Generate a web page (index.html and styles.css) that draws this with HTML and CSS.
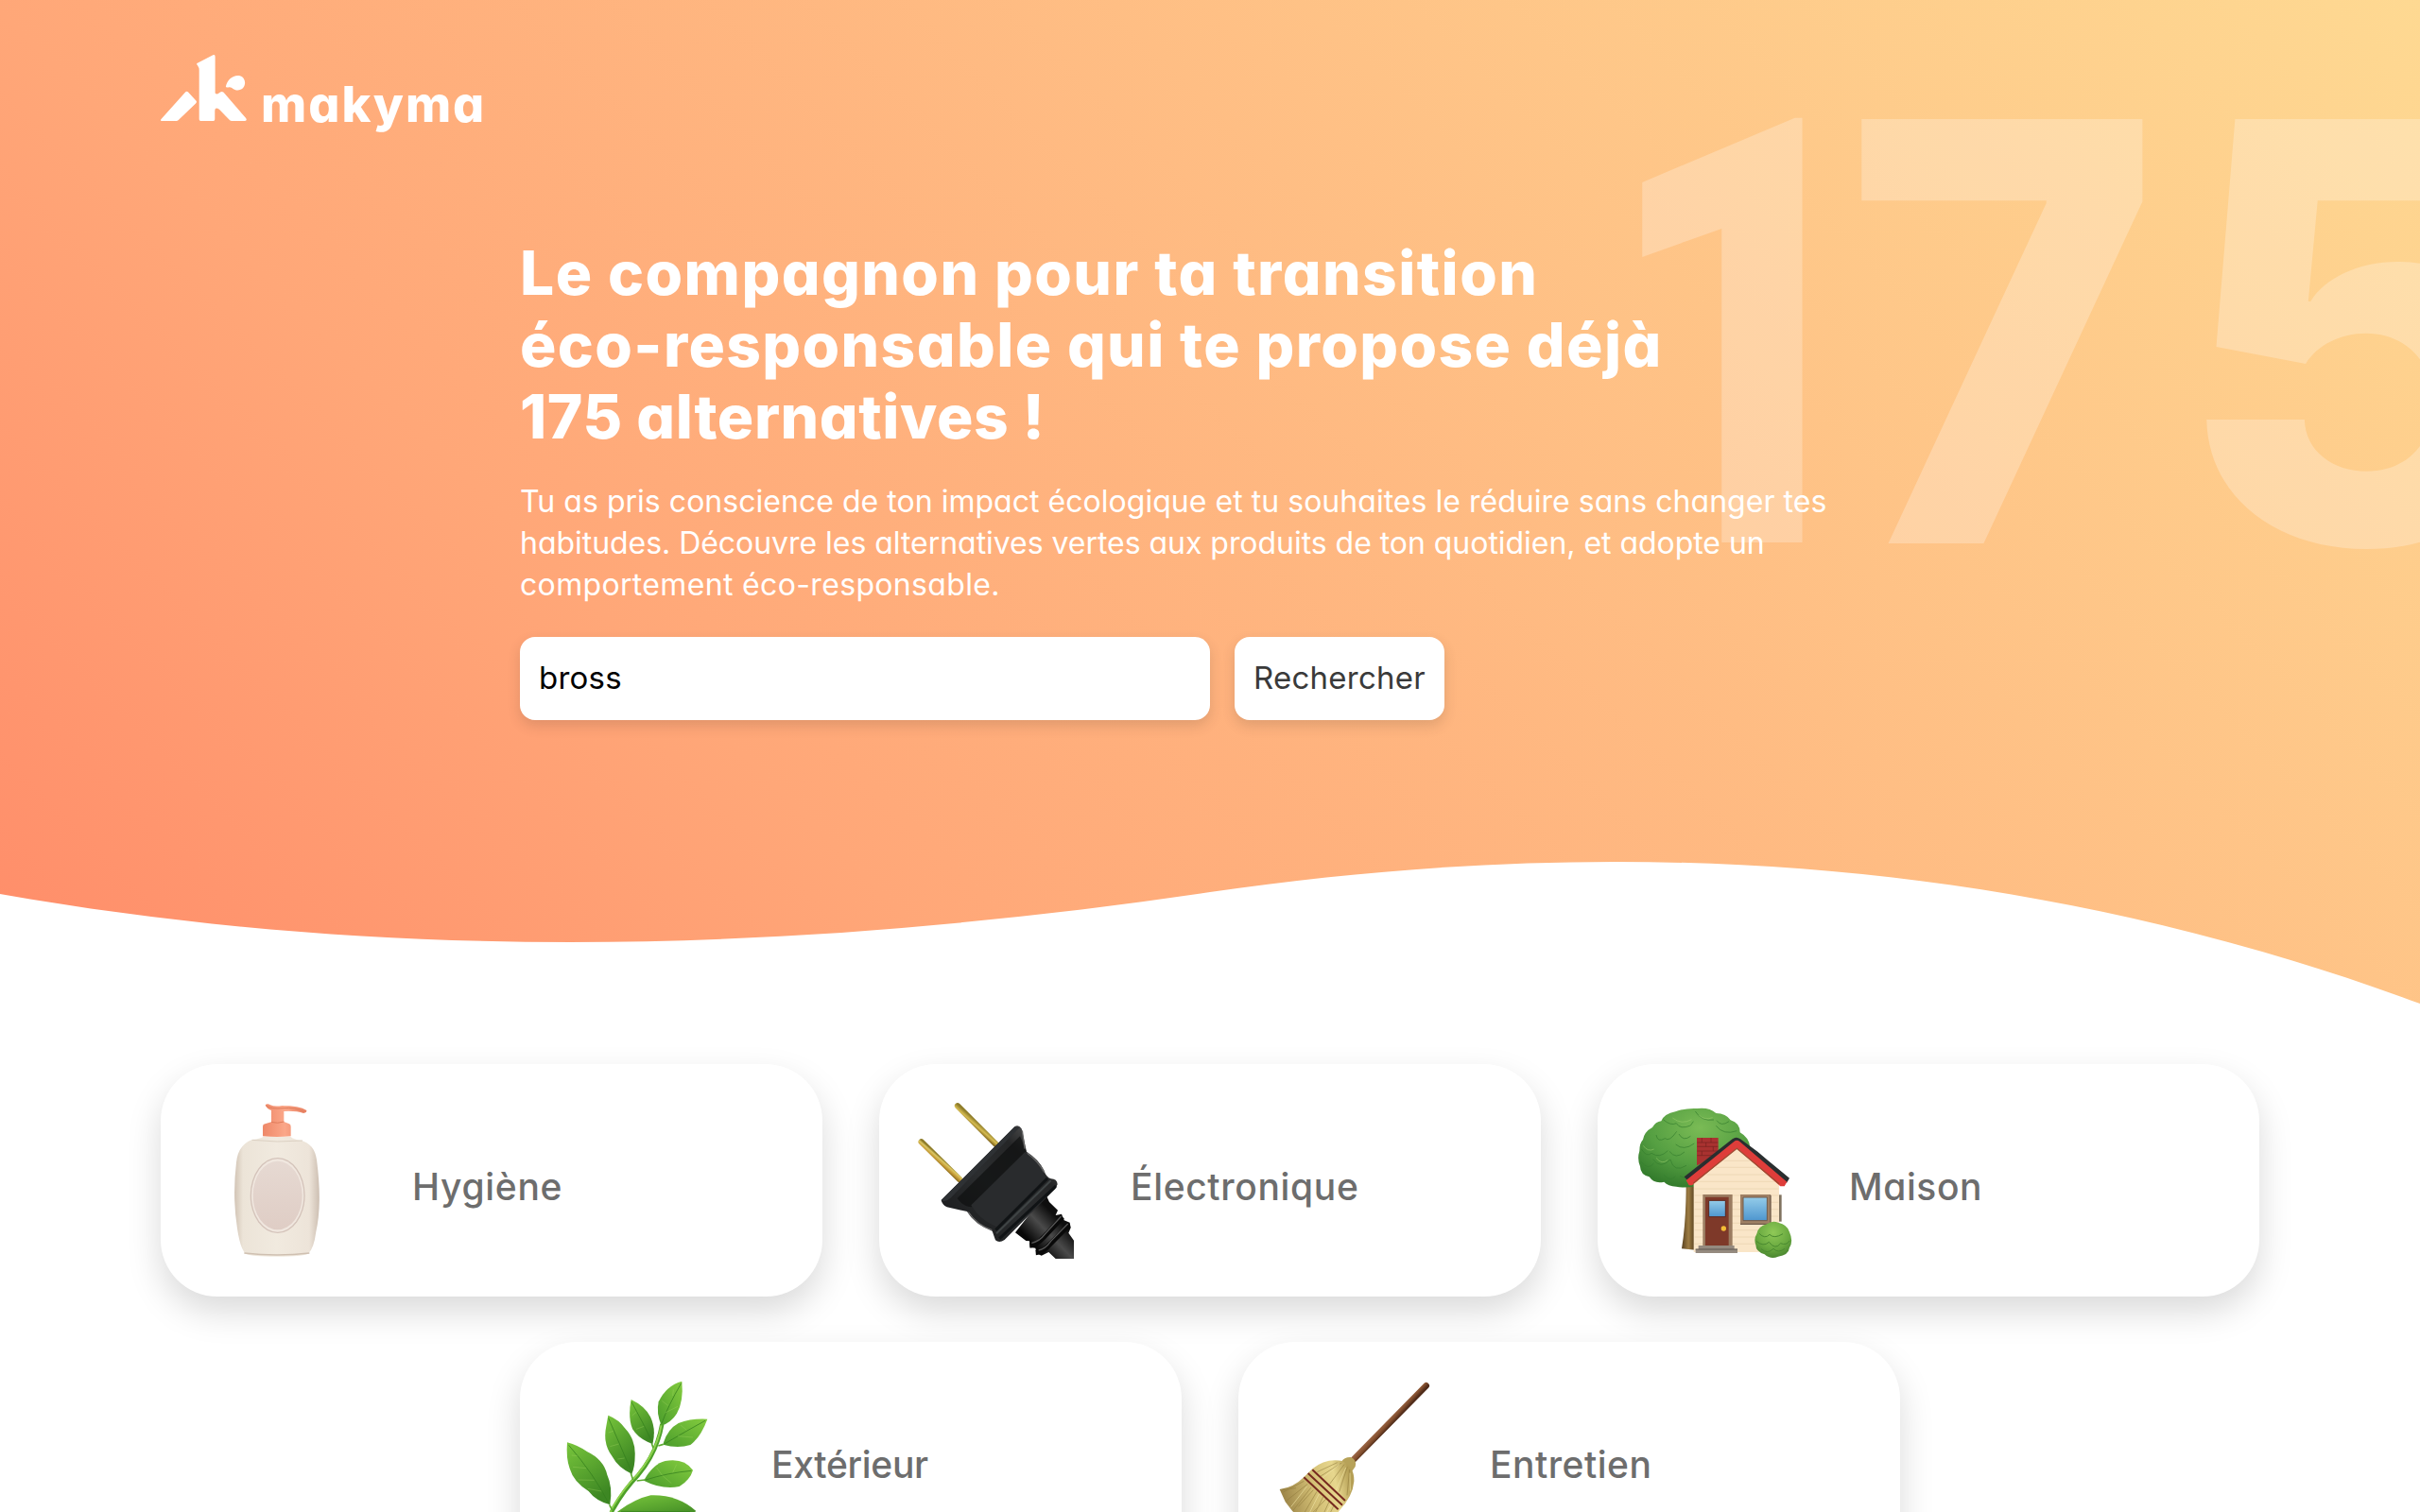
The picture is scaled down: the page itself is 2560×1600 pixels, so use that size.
FILE: index.html
```html
<!DOCTYPE html>
<html lang="fr">
<head>
<meta charset="utf-8">
<title>makyma</title>
<link rel="stylesheet" href="styles.css">
</head>
<body>
<header class="hero">
  <svg class="wave" viewBox="0 0 2560 152" preserveAspectRatio="none" aria-hidden="true">
    <path d="M0 36C427 111 853 97 1280 34C1707 -28 2133 -6 2560 152V153H0Z" fill="#fff"/>
  </svg>
  <div class="count" aria-hidden="true"><span class="one">1</span><span class="seven">7</span><span class="five">5</span></div>
  <a class="logo">
    <svg class="logo-mark" viewBox="60 54 273 211" aria-hidden="true">
      <g fill="#fff">
        <path d="M138 173Q142 169 147 173L172 200Q176 205 171 209L116 262Q113 265 109 265H62Q57 264 61 259Z"/>
        <path d="M175 81L226 55Q233 52 233 60V176Q238 182 245 176Q253 168 260 174L331 256Q336 265 328 265H286Q282 265 279 262L246 228Q232 219 232 232V260Q232 265 227 265H187Q182 265 182 260V102Q182 95 177 88Q173 84 175 81Z"/>
        <path d="M267 155C271 135 287 120 305 120C319 120 328 131 328 143C328 157 318 167 305 167C291 167 287 156 278 157Q266 159 267 155Z"/>
      </g>
    </svg>
    <span class="logo-name">makyma</span>
  </a>
  <div class="intro">
    <h1><span class="h-a">Le compagnon pour ta transition</span> <span class="h-b">éco-responsable qui te propose déjà</span> <span class="h-c">175 alternatives !</span></h1>
    <p><span class="p-a">Tu as pris conscience de ton impact écologique et tu souhaites le réduire sans changer tes</span> <span class="p-b">habitudes. Découvre les alternatives vertes aux produits de ton quotidien, et adopte un</span> <span class="p-c">comportement éco-responsable.</span></p>
    <form class="search">
      <input class="field" type="text" value="bross" aria-label="Recherche">
      <button class="submit" type="button">Rechercher</button>
    </form>
  </div>
</header>
<main class="cards">
  <a class="card">
    <svg class="icon" viewBox="-30 48 498 498">
      <defs>
        <linearGradient id="body"><stop offset="0" stop-color="#d2c4b5"/><stop offset=".1" stop-color="#ece4d8"/><stop offset=".5" stop-color="#f1eadf"/><stop offset=".88" stop-color="#ede4d9"/><stop offset="1" stop-color="#cdbfb2"/></linearGradient>
        <linearGradient id="label" x2="0" y2="1"><stop offset="0" stop-color="#e6d9d2"/><stop offset="1" stop-color="#dfcdc5"/></linearGradient>
        <linearGradient id="pump"><stop offset="0" stop-color="#ee8868"/><stop offset=".5" stop-color="#fba789"/><stop offset="1" stop-color="#e77f60"/></linearGradient>
      </defs>
      <path d="M176 158H262Q271 167 295 170Q338 181 345 232Q363 370 343 460Q336 515 318 530Q300 539 220 539Q135 539 119 530Q102 512 93 450Q77 350 90 240Q96 184 140 168Q170 164 176 158Z" fill="url(#body)"/>
      <path d="M115 528Q220 540 322 528" fill="none" stroke="#cfc0b1" stroke-width="4"/>
      <path d="M140 169Q220 178 300 171" fill="none" stroke="#dcd1c3" stroke-width="3"/>
      <ellipse cx="221" cy="345" rx="87" ry="120" fill="#d4c3ba"/>
      <ellipse cx="221" cy="345" rx="83" ry="116" fill="#f0e7df"/>
      <ellipse cx="221" cy="345" rx="78" ry="109" fill="url(#label)"/>
      <path d="M174 126Q174 119 181 118L201 112V75Q186 70 182 58Q188 52 198 58Q212 64 235 60Q290 60 313 75Q314 82 303 84Q280 76 241 78V111L258 118Q263 120 263 127V157Q220 161 174 157Z" fill="url(#pump)"/>
      <path d="M184 60Q200 72 240 68Q275 64 305 80M201 112Q220 118 241 111" fill="none" stroke="#e07c5b" stroke-width="3"/>
    </svg>
    <span class="t-hyg">Hygiène</span>
  </a>
  <a class="card">
    <svg class="icon" viewBox="60 48 498 498">
      <defs>
        <linearGradient id="gold" gradientUnits="userSpaceOnUse" x1="125" y1="245" x2="140" y2="228"><stop offset="0" stop-color="#80651c"/><stop offset=".4" stop-color="#c59a35"/><stop offset=".75" stop-color="#dcc763"/><stop offset="1" stop-color="#8e7c29"/></linearGradient>
        <linearGradient id="gold2" gradientUnits="userSpaceOnUse" x1="240" y1="131" x2="255" y2="114"><stop offset="0" stop-color="#80651c"/><stop offset=".5" stop-color="#d6bc52"/><stop offset="1" stop-color="#8e7c29"/></linearGradient>
        <linearGradient id="plug" x1="0" y1="1" x2=".9" y2=".1"><stop offset="0" stop-color="#151617"/><stop offset=".5" stop-color="#2b2d2f"/><stop offset=".8" stop-color="#252627"/><stop offset="1" stop-color="#555"/></linearGradient>
        <linearGradient id="cord" gradientUnits="userSpaceOnUse" x1="420" y1="490" x2="515" y2="400"><stop offset="0" stop-color="#080808"/><stop offset=".45" stop-color="#4a4a4a"/><stop offset=".85" stop-color="#0e0e0e"/></linearGradient>
      </defs>
      <path d="M74 175L196 295" stroke="url(#gold)" stroke-width="19" stroke-linecap="round"/>
      <path d="M189 61L311 183" stroke="url(#gold2)" stroke-width="19" stroke-linecap="round"/>
      <path d="M372 463L468 340L480 366L507 392L500 408L519 404L527 424L545 431L548 448L541 464L558 488V546H500L478 525L455 536L439 528L436 512L419 510L417 490L406 489Z" fill="url(#cord)"/>
      <path d="M418 504Q440 502 463 477L522 414M437 527Q462 525 482 500L542 439" fill="none" stroke="#090909" stroke-width="16"/>
      <path d="M424 496Q450 490 466 468L518 411M446 519Q468 515 485 490L539 435" fill="none" stroke="#555" stroke-width="4"/>
      <path d="M137 360L370 127Q382 119 392 133L408 206Q448 232 463 265Q470 288 485 292Q505 292 506 310Q502 324 490 333L338 486Q321 498 309 487L299 458Q241 435 219 396L155 382Q140 375 137 360Z" fill="url(#plug)"/>
      <path d="M137 360L370 127L386 129L166 354Q150 368 137 360Z" fill="#2e3134"/>
      <path d="M188 354L387 157L407 205L232 382Q206 380 188 354Z" fill="#0e0f10" opacity=".7"/>
      <path d="M232 376L403 207Q444 238 470 289L313 445Q259 423 232 376Z" fill="#292b2d"/>
      <path d="M310 455L474 291M322 482L501 315" stroke="#101315" stroke-width="9"/>
      <path d="M312 466L485 298" stroke="#3f4445" stroke-width="6"/>
      <path d="M410 211Q446 238 464 272M394 139L402 197M223 398Q249 438 298 455" fill="none" stroke="#666" stroke-width="4"/>
    </svg>
    <span class="t-ele">Électronique</span>
  </a>
  <a class="card">
    <svg class="icon" viewBox="60 48 498 498">
      <defs>
        <radialGradient id="tree" cx=".55" cy=".25" r=".75"><stop offset="0" stop-color="#7abb55"/><stop offset=".6" stop-color="#559f42"/><stop offset="1" stop-color="#357d2d"/></radialGradient>
        <radialGradient id="bush" cx=".5" cy=".3" r=".75"><stop offset="0" stop-color="#8fc957"/><stop offset=".6" stop-color="#68a83f"/><stop offset="1" stop-color="#437f2c"/></radialGradient>
        <linearGradient id="trunk"><stop offset="0" stop-color="#57401f"/><stop offset=".5" stop-color="#9d7c43"/><stop offset="1" stop-color="#513b1c"/></linearGradient>
        <linearGradient id="glass" x2="0" y2="1"><stop offset="0" stop-color="#94cce9"/><stop offset="1" stop-color="#4e96cf"/></linearGradient>
      </defs>
      <path d="M221 305H250V518L207 514Q221 430 221 305Z" fill="url(#trunk)"/>
      <path d="M142 109Q151 86 187 79Q219 67 256 69Q294 64 316 84Q348 85 362 106Q392 115 392 145Q420 161 424 191L300 305Q223 326 190 317Q163 315 151 302Q119 309 104 286Q76 280 75 253Q65 229 73 204Q73 179 84 168Q88 143 114 129Q124 111 142 109Z" fill="url(#tree)"/>
      <g fill="none" stroke="#367f2f" stroke-width="3" opacity=".7">
        <path d="M148 104Q172 125 190 116Q202 137 235 123L244 110M250 78Q270 111 309 105M79 198Q96 225 111 211Q137 229 163 203M126 153Q130 178 154 164Q168 176 191 142M168 205Q188 232 216 207M116 230Q139 264 171 231M171 231Q182 275 222 250M79 239Q101 267 119 242M151 280Q170 303 187 285M201 283Q223 297 234 275M198 150Q212 175 235 157M316 124Q340 155 382 140M188 183Q213 205 247 180M318 107Q332 128 357 110"/>
      </g>
      <g fill="none" stroke="#9fd070" stroke-width="3" opacity=".5">
        <path d="M178 99Q207 122 238 104M85 187Q99 208 119 198M126 226Q144 249 163 232M262 91Q281 108 305 98"/>
      </g>
      <path d="M255 162H323V220L255 250Z" fill="#a93230"/>
      <path d="M256 177H322M256 190H322M256 204H322M256 218H318M271 162V177M300 162V177M284 177V190M307 190V204M271 204V218" stroke="#76221f" stroke-width="2"/>
      <path d="M245 300L381 193L516 300V525H245Z" fill="#fae6c8"/>
      <path d="M340 235H424M315 256H450M287 279H480M248 301H514M248 324H514M248 345H514M248 367H514M248 389H514M248 411H514M248 433H514M248 455H514M248 477H514M248 499H514" stroke="#e8d2ae" stroke-width="2"/>
      <path d="M516 343H524V428H516Z" fill="#807360"/>
      <path d="M215 286L368 166Q380 157 393 166L448 206L478 232L520 266L549 290L540 305L515 292L382 184L230 303Z" fill="#292e2f"/>
      <path d="M221 297L373 174Q382 167 391 174L541 302L533 316H520L382 195L240 313H230Z" fill="#de3d3a"/>
      <path d="M244 306L382 196L516 308" fill="none" stroke="#9d4b32" stroke-width="4"/>
      <path d="M274 342H368V507H274Z" fill="#9b7c61"/>
      <path d="M282 350H356V505H282Z" fill="#7e3929"/>
      <path d="M293 361H346V413H293Z" fill="url(#glass)" stroke="#5d271e" stroke-width="3"/>
      <circle cx="340" cy="450" r="8" fill="#f5bd35"/>
      <path d="M260 504H374V515H384V528H251V516H260Z" fill="#958a7f"/>
      <path d="M251 516H384" stroke="#5e5750" stroke-width="3"/>
      <path d="M393 342H489V438H393Z" fill="#9f8064"/>
      <path d="M402 351H478V425H402Z" fill="url(#glass)" stroke="#725a48" stroke-width="3"/>
      <path d="M393 436H489V344" fill="none" stroke="#6f5b4b" stroke-width="4"/>
      <path d="M445 467Q450 443 477 436Q493 424 513 431Q543 438 549 461Q562 490 549 511Q546 535 513 539Q490 550 470 532Q442 524 442 502Q435 482 445 467Z" fill="url(#bush)"/>
      <path d="M453 466Q471 485 486 469Q500 484 528 467M444 490Q466 510 484 493Q504 520 521 497Q539 505 549 489M459 515Q480 533 498 514Q514 530 534 514" fill="none" stroke="#4a8a30" stroke-width="3"/>
    </svg>
    <span class="t-mai">Maison</span>
  </a>
  <a class="card">
    <svg class="icon" viewBox="30 60 498 498">
      <defs>
        <linearGradient id="leaf" x1="0" y1="0" x2=".5" y2="1"><stop offset="0" stop-color="#79c63c"/><stop offset="1" stop-color="#3d8723"/></linearGradient>
        <linearGradient id="leaf2" x1="1" y1="0" x2="0" y2="1"><stop offset="0" stop-color="#84cc3f"/><stop offset="1" stop-color="#4a9c2b"/></linearGradient>
      </defs>
      <path d="M190 545Q190 495 207 469Q240 410 286 362Q345 292 361 201" fill="none" stroke="#4d9f29" stroke-width="13"/>
      <path d="M189 545Q190 490 206 461Q240 405 282 362Q345 286 359 203" fill="none" stroke="#8fd24e" stroke-width="6"/>
      <path d="M194 457L205 478M262 357L269 378M281 381L306 378M328 262L333 277M349 270L365 265" stroke="#5cab30" stroke-width="5"/>
      <path d="M60 259Q94 268 124 289Q175 313 187 362Q205 400 196 457Q150 444 128 414Q80 384 68 342Q56 310 60 259Z" fill="url(#leaf)"/>
      <path d="M190 173Q225 187 243 214Q278 251 275 302Q275 335 265 359Q222 340 203 304Q172 263 184 207Z" fill="url(#leaf)"/>
      <path d="M263 123Q307 144 324 178Q343 217 331 264Q286 248 267 216Q252 179 263 123Z" fill="url(#leaf)"/>
      <path d="M424 65Q430 127 408 167Q391 195 359 206Q342 166 350 130Q374 79 424 65Z" fill="url(#leaf2)"/>
      <path d="M505 185Q484 242 451 267Q411 280 364 266Q377 218 413 198Q455 182 505 185Z" fill="url(#leaf2)"/>
      <path d="M303 380Q334 326 371 318Q430 307 459 347Q450 378 416 399Q361 410 303 380Z" fill="url(#leaf2)"/>
      <path d="M219 479Q275 438 325 427Q410 424 469 477Q400 530 280 510Z" fill="url(#leaf)"/>
      <path d="M65 268Q145 360 191 451M191 182Q228 268 264 351M264 130Q302 199 329 256M422 71Q379 145 360 199M498 190Q434 225 370 263M454 349Q378 356 309 378M231 478L450 479" fill="none" stroke="#347f1d" stroke-width="3" opacity=".75"/>
      <path d="M92 302L74 300M120 341L78 337M146 379L95 378M169 414L125 406M207 223L191 228M224 264L196 272M242 309L220 312M280 162L266 174M304 208L279 217M395 111L397 91M380 142L361 127M371 165L411 145M439 220L420 204M411 239L459 243M361 363L344 339M395 355L407 329M362 364L391 389" stroke="#a6d864" stroke-width="2" opacity=".5"/>
    </svg>
    <span class="t-ext">Extérieur</span>
  </a>
  <a class="card">
    <svg class="icon" viewBox="90 60 498 498">
      <defs>
        <linearGradient id="wood" gradientUnits="userSpaceOnUse" x1="445" y1="185" x2="460" y2="199"><stop offset="0" stop-color="#9a6545"/><stop offset=".5" stop-color="#84502f"/><stop offset="1" stop-color="#4f2b19"/></linearGradient>
        <linearGradient id="straw" x1="0" y1=".7" x2="1" y2=".5"><stop offset="0" stop-color="#937b40"/><stop offset=".5" stop-color="#d3bf75"/><stop offset=".8" stop-color="#e7d78e"/><stop offset="1" stop-color="#b59f55"/></linearGradient>
      </defs>
      <path d="M337 312L566 79" stroke="url(#wood)" stroke-width="20" stroke-linecap="round"/>
      <path d="M297 320Q306 305 327 306Q347 315 341 336L331 350Z" fill="#b7a259"/>
      <path d="M205 343Q247 308 300 318Q339 337 337 383Q333 430 290 476L247 550L215 520L190 512L142 478L119 448L101 408Q146 402 178 369Z" fill="url(#straw)"/>
      <path d="M298 324L230 367M306 329L260 391M316 337L290 416M323 345L315 427M284 323L220 353M178 382L112 417M190 391L124 443M201 402L143 476M219 415L171 497M239 432L199 512M259 445L226 517M274 457L244 520M153 404L109 410M249 438L208 480M208 410L160 463" stroke="#917b3c" stroke-width="3" opacity=".55"/>
      <path d="M291 328L235 374M311 339L278 416M324 356L325 413M188 398L137 464M226 423L190 494M267 452L240 500" stroke="#f2e6a6" stroke-width="3" opacity=".6"/>
      <path d="M205 346L309 444M191 357L300 458M178 370L287 472" stroke="#76291f" stroke-width="6"/>
    </svg>
    <span class="t-ent">Entretien</span>
  </a>
</main>
</body>
</html>
```
FILE: styles.css
```css
* { box-sizing: border-box; }

body {
  margin: 0;
  height: 1600px;
  overflow: hidden;
  background: #fff;
  font-family: Inter, "Open Sans", sans-serif;
  font-feature-settings: "cv11";
}

.hero {
  position: relative;
  height: 1062px;
  padding: 58px 170px 0;
  overflow: hidden;
  color: #fff;
  background: linear-gradient(45deg, #ff8c69, #ffa778 29%, #fed992);
}

.wave {
  position: absolute;
  left: 0;
  bottom: 0;
  width: 100%;
  height: 152px;
  display: block;
}

.count {
  position: absolute;
  left: 1695px;
  top: -23px;
  display: flex;
  font-size: 617px;
  line-height: 747px;
  font-weight: 800;
  color: rgba(255, 255, 255, .25);
}
.count span { transform-origin: 0 0; }
.one {
  width: 256px;
  margin-top: 8px;
  font-family: Roboto, sans-serif;
  font-size: 632px;
  font-weight: 900;
  transform: scaleX(.82);
}
.seven { width: 348px; transform: scaleX(.92); }

.logo {
  position: relative;
  display: flex;
  align-items: flex-end;
  gap: 15px;
  height: 70px;
}
.logo-mark { width: 91px; height: 70px; flex: none; }
.logo-name {
  margin-bottom: -1px;
  font-size: 52px;
  line-height: 36px;
  font-weight: 800;
  letter-spacing: 2px;
}

.intro { position: relative; padding: 123px 0 0 380px; }

h1 {
  margin: 0;
  font-size: 64px;
  line-height: 76px;
  font-weight: 800;
}
h1 span, p span { display: block; width: max-content; }
.h-a { letter-spacing: 1.45px; }
.h-b { letter-spacing: 1.4px; }
.h-c { letter-spacing: .6px; }

p {
  margin: 30px 0 33px;
  font-size: 32px;
  line-height: 44px;
}
.p-a { letter-spacing: .03px; }
.p-b { letter-spacing: -.04px; }
.p-c { letter-spacing: .34px; }

.search { display: flex; gap: 26px; }
.field, .submit {
  height: 88px;
  border: 0;
  border-radius: 16px;
  padding: 0 20px 3px;
  background: #fff;
  font: 400 33px Inter, sans-serif;
  font-feature-settings: "cv11";
  letter-spacing: .25px;
  box-shadow: 0 6px 14px rgba(60, 50, 40, .16);
}
.field { width: 730px; color: #000; }
.submit { width: 222px; padding: 0 0 3px; color: #3a3a3a; }

.cards {
  display: flex;
  flex-wrap: wrap;
  justify-content: center;
  gap: 48px 60px;
  margin: 64px 170px 0;
}
.card {
  display: flex;
  align-items: center;
  gap: 60px;
  width: 700px;
  height: 246px;
  padding: 40px;
  border-radius: 60px;
  background: #fff;
  color: #6d6d6d;
  font-size: 39px;
  line-height: 56px;
  font-weight: 500;
  box-shadow: 0 16px 36px rgba(0, 0, 0, .15);
}
.card span { padding-top: 13px; }
.icon { width: 166px; height: 166px; flex: none; }
.t-hyg { letter-spacing: .7px; }
.t-ele { letter-spacing: .65px; }
.t-mai { letter-spacing: .6px; }
.t-ext { letter-spacing: -.3px; }
.t-ent { letter-spacing: .5px; }
```
